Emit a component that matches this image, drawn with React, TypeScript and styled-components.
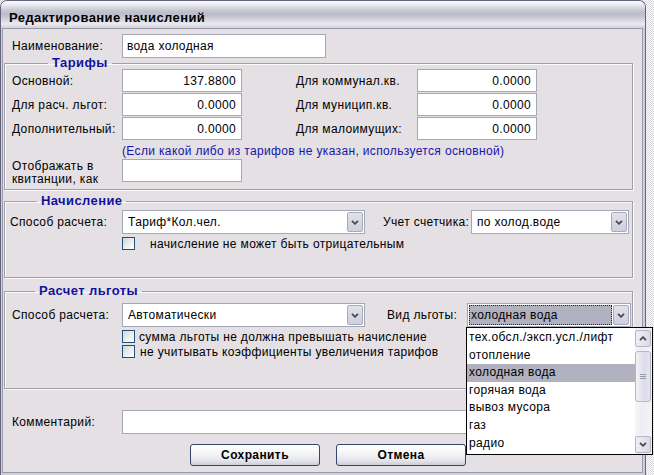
import React from 'react';
import styled, { createGlobalStyle } from 'styled-components';

const GlobalStyle = createGlobalStyle`
  html, body {
    margin: 0;
    padding: 0;
  }
  body {
    width: 654px;
    height: 475px;
    overflow: hidden;
    background: repeating-conic-gradient(#ffffff 0 25%, #d6d6dc 0 50%) 0 0 / 2px 2px;
    font-family: "Liberation Sans", Arial, sans-serif;
    font-size: 12px;
    letter-spacing: 0.35px;
    color: #000;
  }
`;

const Window = styled.div`
  position: relative;
  box-sizing: border-box;
  width: 646px;
  height: 475px;
  display: flex;
  flex-direction: column;
  border: 1px solid #64647e;
  border-bottom: none;
  border-radius: 7px 7px 0 0;
  background: #cfcfdb;
  padding: 0 2px 2px 1px;
`;

const TitleBar = styled.div`
  height: 27px;
  margin: 0 -2px 0 -1px;
  border-radius: 6px 6px 0 0;
  display: flex;
  align-items: center;
  padding-left: 8px;
  background: linear-gradient(
    to bottom,
    #fbfbfd 0%,
    #eeeef3 12%,
    #c2c2d0 38%,
    #bcbccb 50%,
    #d6d6e0 70%,
    #eaeaf0 85%,
    #d2d2dc 100%
  );
`;

const Title = styled.span`
  font-weight: bold;
  font-size: 13px;
  letter-spacing: 0.4px;
  padding-top: 5px;
`;

const Client = styled.div`
  flex: 1;
  display: flex;
  flex-direction: column;
  border: 1px solid #9a9aac;
  background: #e4e0e4;
  padding-top: 5px;
`;

const Row = styled.div<{ $pad?: number; $top?: number }>`
  display: flex;
  align-items: center;
  padding-left: ${p => p.$pad ?? 9}px;
  margin-top: ${p => p.$top ?? 0}px;
`;

const Label = styled.div<{ $w: number; $lead?: number }>`
  width: ${p => p.$w}px;
  padding-left: ${p => p.$lead ?? 0}px;
  flex: none;
  white-space: nowrap;
`;

const TwoLineLabel = styled(Label)`
  white-space: normal;
  line-height: 13px;
  padding-top: 1px;
`;

const Field = styled.div<{ $w: number; $h?: number; $right?: boolean }>`
  box-sizing: border-box;
  flex: none;
  width: ${p => p.$w}px;
  height: ${p => p.$h ?? 23}px;
  border: 1px solid #a3a7b6;
  background: #fff;
  display: flex;
  align-items: center;
  justify-content: ${p => (p.$right ? 'flex-end' : 'flex-start')};
  padding: 0 5px 0 4px;
  white-space: nowrap;
`;

const Group = styled.fieldset<{ $h: number; $top: number; $pad?: number }>`
  box-sizing: border-box;
  width: 629px;
  height: ${p => p.$h}px;
  margin: ${p => p.$top}px 0 0 1px;
  padding: 5px 0 0 ${p => p.$pad ?? 7}px;
  border: 1px solid #a0a0aa;
  box-shadow: inset 1px 1px 0 #fafafa, 1px 1px 0 #fafafa;
  min-width: 0;
`;

const Legend = styled.legend<{ $x: number }>`
  margin-left: ${p => p.$x}px;
  padding: 0 4px;
  line-height: 2px;
  font-size: 13px;
  font-weight: bold;
  letter-spacing: 0.4px;
  color: #12129a;
  background: #e4e0e4;
`;

const TariffGrid = styled.div`
  display: grid;
  grid-template-columns: 110px 120px 54px 121px 120px;
  grid-auto-rows: 23px;
  row-gap: 1px;
  align-items: center;
`;

const Note = styled.div`
  color: #1616a8;
  margin: 4px 0 0 110px;
  height: 14px;
  line-height: 14px;
  white-space: nowrap;
`;

const Select = styled.div<{ $w: number }>`
  box-sizing: border-box;
  flex: none;
  width: ${p => p.$w}px;
  height: 24px;
  border: 1px solid #a3a7b6;
  background: #fff;
  display: flex;
  align-items: stretch;
  padding: 1px;
`;

const SelectText = styled.div<{ $focused?: boolean }>`
  flex: 1;
  display: flex;
  align-items: center;
  padding-left: ${p => (p.$focused ? 2 : 4)}px;
  margin-right: ${p => (p.$focused ? 1 : 0)}px;
  white-space: nowrap;
  background: ${p => (p.$focused ? '#b1b1bf' : 'transparent')};
  outline: ${p => (p.$focused ? '1px dotted #222' : 'none')};
  outline-offset: -1px;
`;

const ArrowButton = styled.div`
  box-sizing: border-box;
  width: 16px;
  flex: none;
  border: 1px solid #a9a9bd;
  border-radius: 2px;
  background: linear-gradient(to bottom, #e2e2ec, #cfcfdd);
  display: flex;
  align-items: center;
  justify-content: center;
`;

const Chevron = ({ up }: { up?: boolean }) => (
  <svg width="8" height="5" viewBox="0 0 8 5">
    <polyline
      points={up ? '1,4.2 4,1.2 7,4.2' : '1,0.8 4,3.8 7,0.8'}
      fill="none"
      stroke="#4a4a52"
      strokeWidth="1.8"
    />
  </svg>
);

const CheckRow = styled.div<{ $top: number; $gap: number; $left?: number }>`
  display: flex;
  align-items: center;
  gap: ${p => p.$gap}px;
  margin: ${p => p.$top}px 0 0 ${p => p.$left ?? 110}px;
  height: 13px;
  white-space: nowrap;
`;

const CheckBox = styled.div`
  box-sizing: border-box;
  width: 13px;
  height: 13px;
  flex: none;
  border: 1px solid #1c5180;
  background: linear-gradient(135deg, #d5d5d2 0%, #f0f0ee 60%, #ffffff 100%);
`;

const ButtonRow = styled.div`
  display: flex;
  gap: 16px;
  padding-left: 187px;
  margin-top: 10px;
`;

const Button = styled.div`
  box-sizing: border-box;
  width: 130px;
  height: 22px;
  border: 1px solid #34456a;
  border-radius: 3px;
  background: linear-gradient(to bottom, #ffffff 0%, #f4f4f6 45%, #e2e2ea 80%, #cdcdd9 100%);
  display: flex;
  align-items: center;
  justify-content: center;
  font-weight: bold;
  font-size: 12px;
  letter-spacing: 0.4px;
`;

const DropList = styled.div`
  position: absolute;
  left: 465px;
  top: 326px;
  box-sizing: border-box;
  width: 187px;
  height: 128px;
  border: 1px solid #000;
  background: #fff;
  display: flex;
  z-index: 2;
`;

const Items = styled.div`
  flex: 1;
  padding-top: 1px;
  overflow: hidden;
`;

const Item = styled.div<{ $selected?: boolean }>`
  height: 17.6px;
  line-height: 17.6px;
  padding-left: 2px;
  white-space: nowrap;
  background: ${p => (p.$selected ? '#b1b1bf' : 'transparent')};
`;

const ScrollBar = styled.div`
  width: 16px;
  flex: none;
  display: flex;
  flex-direction: column;
  background: linear-gradient(to right, #f6f6f9, #ededf3 40%, #f3f3f7);
  padding: 2px 1px 1px 0;
`;

const ScrollButton = styled.div`
  box-sizing: border-box;
  height: 17px;
  flex: none;
  border: 1px solid #b4b4c6;
  border-radius: 2px;
  background: linear-gradient(to right, #eeeef4, #dadae6);
  display: flex;
  align-items: center;
  justify-content: center;
`;

const Track = styled.div`
  flex: 1;
  padding: 4px 0 34px;
  display: flex;
`;

const Thumb = styled.div`
  flex: 1;
  box-sizing: border-box;
  border: 1px solid #b6b6c8;
  border-radius: 3px;
  background: linear-gradient(to right, #f2f2f7, #dcdce8 60%, #e6e6ee);
  display: flex;
  align-items: center;
  justify-content: center;
`;

const Grip = styled.div`
  width: 6px;
  height: 5px;
  background: repeating-linear-gradient(to bottom, #9a9aae 0 1px, transparent 1px 2px);
`;

const tariffs: [string, string, string, string][] = [
  ['Основной:', '137.8800', 'Для коммунал.кв.', '0.0000'],
  ['Для расч. льгот:', '0.0000', 'Для муницип.кв.', '0.0000'],
  ['Дополнительный:', '0.0000', 'Для малоимущих:', '0.0000'],
];

const kinds = [
  'тех.обсл./эксп.усл./лифт',
  'отопление',
  'холодная вода',
  'горячая вода',
  'вывоз мусора',
  'газ',
  'радио',
];

const Combo = ({ w, text, focused }: { w: number; text: string; focused?: boolean }) => (
  <Select $w={w}>
    <SelectText $focused={focused}>{text}</SelectText>
    <ArrowButton>
      <Chevron />
    </ArrowButton>
  </Select>
);

export default function App() {
  return (
    <>
      <GlobalStyle />
      <Window>
        <TitleBar>
          <Title>Редактирование начислений</Title>
        </TitleBar>
        <Client>
          <Row>
            <Label $w={110}>Наименование:</Label>
            <Field $w={204} $h={24}>вода холодная</Field>
          </Row>

          <Group $top={4} $h={128}>
            <Legend $x={36}>Тарифы</Legend>
            <TariffGrid>
              {tariffs.map(([l1, v1, l2, v2]) => (
                <React.Fragment key={l1}>
                  <Label $w={110}>{l1}</Label>
                  <Field $w={120} $right>{v1}</Field>
                  <div />
                  <Label $w={121}>{l2}</Label>
                  <Field $w={120} $right>{v2}</Field>
                </React.Fragment>
              ))}
            </TariffGrid>
            <Note>(Если какой либо из тарифов не указан, используется основной)</Note>
            <Row $pad={0} $top={1} style={{ alignItems: 'flex-start' }}>
              <TwoLineLabel $w={110}>Отображать в квитанции, как</TwoLineLabel>
              <Field $w={120} />
            </Row>
          </Group>

          <Group $top={10} $h={78} $pad={5}>
            <Legend $x={27}>Начисление</Legend>
            <Row $pad={0} $top={3}>
              <Label $w={112}>Способ расчета:</Label>
              <Combo w={243} text="Тариф*Кол.чел." />
              <Label $w={88} $lead={18}>Учет счетчика:</Label>
              <Combo w={158} text="по холод.воде" />
            </Row>
            <CheckRow $top={3} $gap={15} $left={112}>
              <CheckBox />
              начисление не может быть отрицательным
            </CheckRow>
          </Group>

          <Group $top={12} $h={99}>
            <Legend $x={23}>Расчет льготы</Legend>
            <Row $pad={0} $top={6}>
              <Label $w={110}>Способ расчета:</Label>
              <Combo w={243} text="Автоматически" />
              <Label $w={80} $lead={22}>Вид льготы:</Label>
              <Combo w={164} text="холодная вода" focused />
            </Row>
            <CheckRow $top={3} $gap={4}>
              <CheckBox />
              сумма льготы не должна превышать начисление
            </CheckRow>
            <CheckRow $top={2} $gap={5}>
              <CheckBox />
              не учитывать коэффициенты увеличения тарифов
            </CheckRow>
          </Group>

          <Row $top={21}>
            <Label $w={110}>Комментарий:</Label>
            <Field $w={508} $h={24} />
          </Row>

          <ButtonRow>
            <Button>Сохранить</Button>
            <Button>Отмена</Button>
          </ButtonRow>
        </Client>

        <DropList>
          <Items>
            {kinds.map(k => (
              <Item key={k} $selected={k === 'холодная вода'}>
                {k}
              </Item>
            ))}
          </Items>
          <ScrollBar>
            <ScrollButton>
              <Chevron up />
            </ScrollButton>
            <Track>
              <Thumb>
                <Grip />
              </Thumb>
            </Track>
            <ScrollButton>
              <Chevron />
            </ScrollButton>
          </ScrollBar>
        </DropList>
      </Window>
    </>
  );
}
